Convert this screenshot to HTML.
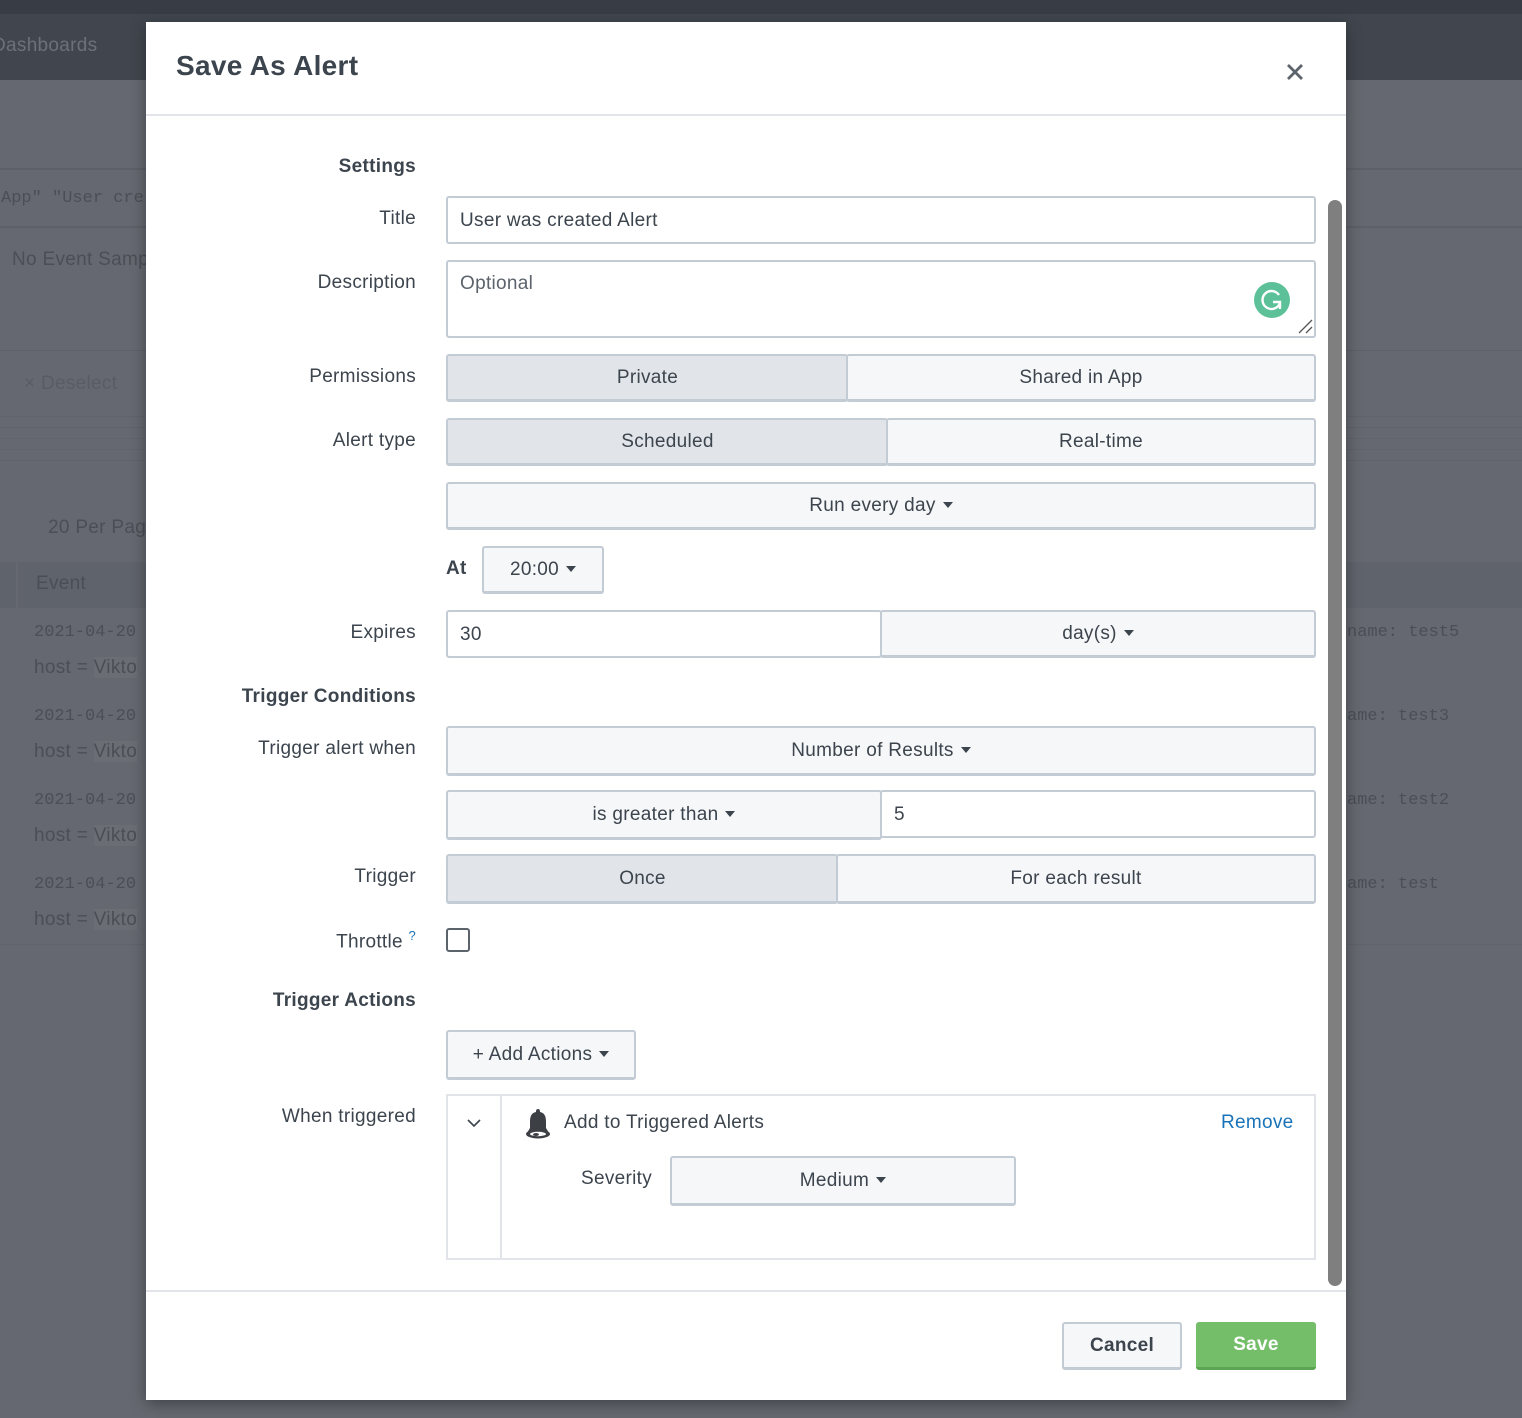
<!DOCTYPE html>
<html><head><meta charset="utf-8"><style>
*{box-sizing:border-box;margin:0;padding:0}
body{width:1522px;height:1418px;position:relative;overflow:hidden;background:#656870;font-family:"Liberation Sans",sans-serif;color:#3c444d;font-size:19px;letter-spacing:.3px}
.a{position:absolute}
.bgt{position:absolute;color:#4a4e56;font-size:19px;white-space:nowrap}
.mono{font-family:"Liberation Mono",monospace;font-size:17px;letter-spacing:0}
.modal{position:absolute;left:146px;top:22px;width:1200px;height:1378px;background:#fff;box-shadow:0 4px 14px rgba(0,0,0,.35)}
.lbl{position:absolute;right:930px;text-align:right;white-space:nowrap;font-size:19px;color:#3c444d;margin-top:2px}
.b{font-weight:bold}
.inp{position:absolute;border:2px solid #c3cbd4;border-radius:3px;background:#fff;padding-left:12px;display:flex;align-items:center;font-size:19px;color:#3c444d;padding-top:2px}
.btn{position:absolute;border:2px solid #c3cbd4;border-bottom-width:3px;border-radius:3px;background:#f6f7f9;display:flex;align-items:center;justify-content:center;font-size:19px;color:#3c444d;white-space:nowrap}
.sel{background:#e1e5ea}
.car{display:inline-block;width:0;height:0;border-left:5px solid transparent;border-right:5px solid transparent;border-top:6px solid #3c444d;margin-left:7px;vertical-align:middle;position:relative;top:-1px}
</style></head><body>
<div class="a" style="left:0;top:0;width:1522px;height:14px;background:#383d45"></div>
<div class="a" style="left:0;top:14px;width:1522px;height:66px;background:#41464e"></div>
<div class="bgt" style="left:-8px;top:35px;color:#6c7079">Dashboards</div>
<div class="a" style="left:0;top:168px;width:1522px;height:2px;background:#5c6068"></div>
<div class="a" style="left:0;top:226px;width:1522px;height:2px;background:#5c6068"></div>
<div class="bgt mono" style="left:1px;top:189px">App" "User cre</div>
<div class="bgt" style="left:12px;top:249px">No Event Samp</div>
<div class="a" style="left:0;top:350px;width:1522px;height:1px;background:#5c6068"></div>
<div class="bgt" style="left:24px;top:373px;color:#585c64">× Deselect</div>
<div class="a" style="left:0;top:416px;width:1522px;height:1px;background:#5f636b"></div>
<div class="a" style="left:0;top:427px;width:1522px;height:1px;background:#5f636b"></div>
<div class="a" style="left:0;top:438px;width:1522px;height:1px;background:#5f636b"></div>
<div class="a" style="left:0;top:449px;width:1522px;height:1px;background:#5f636b"></div>
<div class="a" style="left:0;top:460px;width:1522px;height:1px;background:#5f636b"></div>
<div class="bgt" style="left:48px;top:517px">20 Per Pag</div>
<div class="a" style="left:0;top:562px;width:1522px;height:46px;background:#5f636b"></div>
<div class="a" style="left:16px;top:562px;width:2px;height:46px;background:#656870"></div>
<div class="bgt" style="left:36px;top:573px">Event</div>
<div class="bgt mono" style="left:34px;top:623px">2021-04-20</div>
<div class="bgt" style="left:34px;top:657px">host = <span style="background:#6a6d74">Vikto</span></div>
<div class="bgt mono" style="left:34px;top:707px">2021-04-20</div>
<div class="bgt" style="left:34px;top:741px">host = <span style="background:#6a6d74">Vikto</span></div>
<div class="bgt mono" style="left:34px;top:791px">2021-04-20</div>
<div class="bgt" style="left:34px;top:825px">host = <span style="background:#6a6d74">Vikto</span></div>
<div class="bgt mono" style="left:34px;top:875px">2021-04-20</div>
<div class="bgt" style="left:34px;top:909px">host = <span style="background:#6a6d74">Vikto</span></div>
<div class="a" style="left:0;top:944px;width:1522px;height:1px;background:#5f636b"></div>
<div class="bgt mono" style="left:1347px;top:623px">name: test5</div>
<div class="bgt mono" style="left:1347px;top:707px">ame: test3</div>
<div class="bgt mono" style="left:1347px;top:791px">ame: test2</div>
<div class="bgt mono" style="left:1347px;top:875px">ame: test</div>

<div class="modal">
<div class="a" style="left:30px;top:28px;font-size:28px;font-weight:bold;color:#3c444d">Save As Alert</div>
<svg class="a" style="left:1140px;top:41px" width="18" height="18" viewBox="0 0 18 18"><path d="M2 2L16 16M16 2L2 16" stroke="#5c636b" stroke-width="2.8"/></svg>
<div class="a" style="left:0;top:92px;width:1200px;height:2px;background:#e1e5ea"></div>

<div class="a" style="left:1182px;top:178px;width:14px;height:1086px;background:#7f7f7f;border-radius:7px"></div>

<div class="lbl b" style="top:132px">Settings</div>
<div class="lbl" style="top:184px">Title</div>
<div class="inp" style="left:300px;top:174px;width:870px;height:48px">User was created Alert</div>
<div class="lbl" style="top:248px">Description</div>
<div class="inp" style="left:300px;top:238px;width:870px;height:78px;align-items:flex-start;padding-top:11px;color:#5c636b">Optional</div>
<svg class="a" style="left:1108px;top:260px" width="36" height="36" viewBox="0 0 36 36"><circle cx="18" cy="18" r="18" fill="#5cc198"/><path d="M25 13A9 9 0 1 0 26 21" fill="none" stroke="#fff" stroke-width="2.4"/><path d="M19 20H26V27" fill="none" stroke="#fff" stroke-width="2.4"/></svg>
<svg class="a" style="left:1152px;top:297px" width="15" height="15"><path d="M1 14L14 1M8 14L14 8" stroke="#555" stroke-width="1.3"/></svg>

<div class="lbl" style="top:342px">Permissions</div>
<div class="btn sel" style="left:300px;top:332px;width:402px;height:48px;border-right-width:1px">Private</div>
<div class="btn" style="left:700px;top:332px;width:470px;height:48px">Shared in App</div>

<div class="lbl" style="top:406px">Alert type</div>
<div class="btn sel" style="left:300px;top:396px;width:442px;height:48px;border-right-width:1px">Scheduled</div>
<div class="btn" style="left:740px;top:396px;width:430px;height:48px">Real-time</div>

<div class="btn" style="left:300px;top:460px;width:870px;height:48px">Run every day<span class="car"></span></div>

<div class="a b" style="left:300px;top:536px">At</div>
<div class="btn" style="left:336px;top:524px;width:122px;height:48px">20:00<span class="car"></span></div>

<div class="lbl" style="top:598px">Expires</div>
<div class="inp" style="left:300px;top:588px;width:436px;height:48px">30</div>
<div class="btn" style="left:734px;top:588px;width:436px;height:48px">day(s)<span class="car"></span></div>

<div class="lbl b" style="top:662px">Trigger Conditions</div>
<div class="lbl" style="top:714px">Trigger alert when</div>
<div class="btn" style="left:300px;top:704px;width:870px;height:50px">Number of Results<span class="car"></span></div>
<div class="btn" style="left:300px;top:768px;width:436px;height:50px">is greater than<span class="car"></span></div>
<div class="inp" style="left:734px;top:768px;width:436px;height:48px">5</div>

<div class="lbl" style="top:842px">Trigger</div>
<div class="btn sel" style="left:300px;top:832px;width:392px;height:50px;border-right-width:1px">Once</div>
<div class="btn" style="left:690px;top:832px;width:480px;height:50px">For each result</div>

<div class="lbl" style="top:904px">Throttle <sup style="color:#1a73b8;font-size:13px">?</sup></div>
<div class="a" style="left:300px;top:906px;width:24px;height:24px;border:2px solid #5c636b;border-radius:3px"></div>

<div class="lbl b" style="top:966px">Trigger Actions</div>
<div class="btn" style="left:300px;top:1008px;width:190px;height:50px">+ Add Actions<span class="car"></span></div>

<div class="lbl" style="top:1082px">When triggered</div>
<div class="a" style="left:300px;top:1072px;width:870px;height:166px;border:2px solid #e1e5ea"></div>
<div class="a" style="left:354px;top:1072px;width:2px;height:166px;background:#e1e5ea"></div>
<svg class="a" style="left:321px;top:1096px" width="14" height="10"><path d="M1 2L7 8L13 2" fill="none" stroke="#3c444d" stroke-width="1.6"/></svg>
<svg class="a" style="left:377px;top:1086px" width="30" height="32" viewBox="0 0 30 32"><path d="M15 1c2 0 2 2 2 3c5 1 6 5 6 10v6l3 5H4l3-5v-6c0-5 1-9 6-10c0-1 0-3 2-3z" fill="#3c3f44"/><ellipse cx="15" cy="26" rx="12" ry="4.5" fill="#3c3f44"/><ellipse cx="15" cy="26" rx="8" ry="2.2" fill="#fff"/><ellipse cx="13" cy="26.5" rx="3" ry="1.5" fill="#3c3f44"/></svg>
<div class="a" style="left:418px;top:1090px">Add to Triggered Alerts</div>
<div class="a" style="left:1075px;top:1090px;color:#1a73b8">Remove</div>
<div class="a" style="left:435px;top:1146px">Severity</div>
<div class="btn" style="left:524px;top:1134px;width:346px;height:50px">Medium<span class="car"></span></div>

<div class="a" style="left:0;top:1268px;width:1200px;height:2px;background:#e1e5ea"></div>
<div class="btn" style="left:916px;top:1300px;width:120px;height:48px;font-weight:bold">Cancel</div>
<div class="a" style="left:1050px;top:1300px;width:120px;height:48px;background:#74be6a;border-bottom:3px solid #5ea455;border-radius:3px;color:#fff;font-weight:bold;display:flex;align-items:center;justify-content:center">Save</div>
</div>
</body></html>
